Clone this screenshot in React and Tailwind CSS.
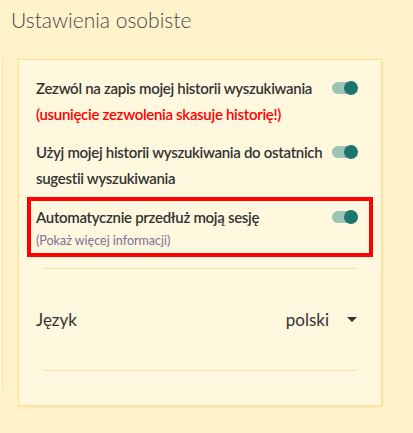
import React from 'react'

const Toggle = () => (
  <div className="relative w-[26px] h-[14px] flex-shrink-0">
    <div className="absolute left-0 top-[1px] w-[24px] h-[12px] rounded-full bg-[#9dc3b5]" />
    <div className="absolute right-0 top-0 w-[14px] h-[14px] rounded-full bg-[#1b7670]" />
  </div>
)

const Row = ({ label, children }) => (
  <div className="flex items-start justify-between gap-[6px]">
    <div className="flex-1">
      <div className="text-[15px] leading-[26px] font-semibold tracking-[-0.3px] text-[#333]">{label}</div>
      {children}
    </div>
    <div className="pt-[6px] pr-[2px]">
      <Toggle />
    </div>
  </div>
)

export default function App() {
  return (
    <div className="min-h-[433px] bg-[#fff3cc] font-['Lato',sans-serif] text-[#333]">
      <h1 className="pl-[11px] pt-[6px] text-[21px] leading-[28px] font-light text-[#4a4a4a]">
        Ustawienia osobiste
      </h1>
      <div className="flex mt-[25px]">
        <div className="w-[3px] h-[331px] border-r border-[#fbe08e] bg-[#fff8de]" />
        <div className="ml-[15px] w-[364px] h-[347px] bg-[#fff8de] border border-[#fbe08e] shadow-[1px_1px_3px_rgba(230,200,120,0.4)]">
          <div className="pt-[15px] pl-[17px] pr-[21px]">
            <Row label="Zezwól na zapis mojej historii wyszukiwania">
              <div className="text-[15px] leading-[26px] font-semibold tracking-[-0.3px] text-[#ff0000]">
                (usunięcie zezwolenia skasuje historię!)
              </div>
            </Row>
            <div className="mt-[12px]">
              <Row label="Użyj mojej historii wyszukiwania do ostatnich sugestii wyszukiwania" />
            </div>
          </div>
          <div className="mx-[8px] mt-[6px] h-[60px] border-4 border-[#ff0000] pl-[5px] pr-[9px] pt-[3px]">
            <Row label="Automatycznie przedłuż moją sesję">
              <div className="text-[12.5px] leading-[22px] text-[#7b6e9b]">(Pokaż więcej informacji)</div>
            </Row>
          </div>
          <div className="mx-[24px] mt-[11px] border-t border-[#f8e3a3]" />
          <div className="flex items-center justify-between pl-[17px] pr-[24px] h-[101px] text-[17px] text-[#333]">
            <span>Język</span>
            <div className="flex items-center gap-[18px]">
              <span>polski</span>
              <svg width="10" height="6" viewBox="0 0 10 6">
                <path d="M0 0h10L5 5z" fill="#333" />
              </svg>
            </div>
          </div>
          <div className="mx-[24px] border-t border-[#f8e3a3]" />
        </div>
      </div>
    </div>
  )
}
